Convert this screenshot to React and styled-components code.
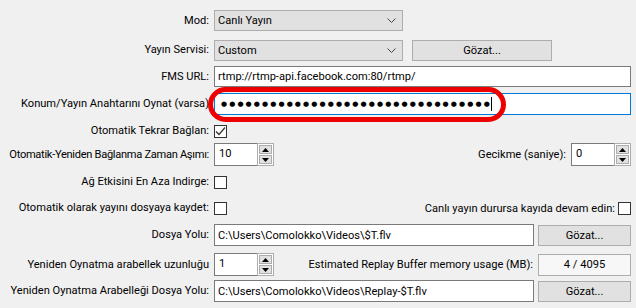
import React from "react";
import styled, { createGlobalStyle } from "styled-components";

const Global = createGlobalStyle`
  html, body { margin: 0; padding: 0; background: #f0f0f0; }
  body { font-family: Roboto, "Noto Sans", sans-serif; font-size: 11.1px; color: #000; }
  * { box-sizing: border-box; }
`;

const Page = styled.div`
  width: 636px;
  height: 308px;
  padding-top: 10px;
  background: #f0f0f0;
  position: relative;
  overflow: hidden;
`;

const Row = styled.div`
  display: grid;
  grid-template-columns: 209px 1fr;
  column-gap: 5px;
  height: ${(p) => p.$h}px;
  margin-top: ${(p) => p.$mt || 0}px;
  align-items: center;
`;

const Label = styled.div`
  display: flex;
  justify-content: flex-end;
  white-space: nowrap;
  line-height: 14px;
  min-width: 0;
  letter-spacing: ${(p) => p.$ls || 0}px;
`;

const Field = styled.div`
  display: flex;
  align-items: center;
  height: 100%;
  padding-right: 5px;
  gap: ${(p) => p.$gap || 0}px;
  min-width: 0;
`;

const Spacer = styled.div`
  flex: 1;
`;

const SideLabel = styled.div`
  white-space: nowrap;
  margin-right: ${(p) => p.$mr || 5}px;
`;

const Combo = styled.div`
  width: ${(p) => p.$w}px;
  height: 21px;
  background: #e1e1e1;
  border: 1px solid #adadad;
  display: flex;
  align-items: center;
  padding-left: 3px;
  justify-content: space-between;
  padding-right: 6px;
`;

const Button = styled.div`
  width: ${(p) => p.$w}px;
  height: 21px;
  background: #e1e1e1;
  border: 1px solid #adadad;
  display: flex;
  align-items: center;
  justify-content: center;
  margin-top: ${(p) => p.$mt || 0}px;
`;

const TextBox = styled.div`
  flex: ${(p) => (p.$w ? "none" : 1)};
  width: ${(p) => (p.$w ? `${p.$w}px` : "auto")};
  height: ${(p) => p.$h || 21}px;
  background: ${(p) => (p.$readonly ? "#f7f7f7" : "#fff")};
  border: 1px solid ${(p) => (p.$focus ? "#0078d7" : p.$readonly ? "#adadad" : "#7a7a7a")};
  display: flex;
  align-items: center;
  justify-content: ${(p) => (p.$center ? "center" : "flex-start")};
  padding-left: ${(p) => (p.$center ? 0 : 3)}px;
  white-space: nowrap;
  overflow: hidden;
`;

const Dots = styled.span`
  font-family: "DejaVu Sans", sans-serif;
  font-size: 7px;
  letter-spacing: 2.1px;
  line-height: 10px;
  padding-left: 3px;
`;

const Caret = styled.span`
  display: inline-block;
  width: 1px;
  height: 14px;
  background: #000;
  margin-left: -1px;
`;

const Check = styled.div`
  width: 13px;
  height: 13px;
  border: 1px solid #333;
  background: #fff;
  display: flex;
  align-items: center;
  justify-content: center;
`;

const Spin = styled.div`
  display: flex;
  width: 60px;
  height: 23px;
  align-self: flex-start;
`;

const SpinText = styled.div`
  flex: 1;
  background: #fff;
  border: 1px solid #7a7a7a;
  border-right: none;
  padding: 2px 0 0 4px;
  line-height: 16px;
`;

const SpinButtons = styled.div`
  width: 17px;
  border: 1px solid #adadad;
  background: #fff;
  display: flex;
  flex-direction: column;
  gap: 1px;
  padding: 1px;
`;

const SpinBtn = styled.div`
  flex: 1;
  background: #e1e1e1;
  border: 1px solid #adadad;
  display: flex;
  align-items: center;
  justify-content: center;
`;

const Ring = styled.div`
  position: absolute;
  left: 208px;
  top: 87px;
  width: 298px;
  height: 35px;
  border: 5px solid #ee0000;
  border-radius: 18px;
  pointer-events: none;
`;

const Chevron = () => (
  <svg width="9" height="5" viewBox="0 0 9 5">
    <path d="M0.5 0.5 L4.5 4.5 L8.5 0.5" fill="none" stroke="#444" strokeWidth="1" />
  </svg>
);

const CheckMark = () => (
  <svg width="11" height="11" viewBox="0 0 11 11">
    <path d="M1 5.5 L4 8.5 L10 1.5" fill="none" stroke="#333" strokeWidth="1.2" />
  </svg>
);

const Tri = ({ up }) => (
  <svg width="7" height="4" viewBox="0 0 7 4">
    <path d={up ? "M0 4 L7 4 L3.5 0 Z" : "M0 0 L7 0 L3.5 4 Z"} fill="#000" />
  </svg>
);

const SpinBox = ({ value }) => (
  <Spin>
    <SpinText>{value}</SpinText>
    <SpinButtons>
      <SpinBtn><Tri up /></SpinBtn>
      <SpinBtn><Tri /></SpinBtn>
    </SpinButtons>
  </Spin>
);

export default function App() {
  return (
    <>
      <Global />
      <Page>
        <Row $h={21}>
          <Label>Mod:</Label>
          <Field>
            <Combo $w={189}>Canlı Yayın<Chevron /></Combo>
          </Field>
        </Row>
        <Row $h={22} $mt={8}>
          <Label>Yayın Servisi:</Label>
          <Field $gap={9}>
            <Combo $w={189}>Custom<Chevron /></Combo>
            <Button $w={140} $mt={1}>Gözat...</Button>
          </Field>
        </Row>
        <Row $h={21} $mt={5}>
          <Label>FMS URL:</Label>
          <Field>
            <TextBox>rtmp://rtmp-api.facebook.com:80/rtmp/</TextBox>
          </Field>
        </Row>
        <Row $h={22} $mt={6}>
          <Label>Konum/Yayın Anahtarını Oynat (varsa)</Label>
          <Field>
            <TextBox $focus $h={22}>
              <Dots>{"●".repeat(33)}</Dots>
              <Caret />
            </TextBox>
          </Field>
        </Row>
        <Row $h={13} $mt={9}>
          <Label>Otomatik Tekrar Bağlan:</Label>
          <Field>
            <Check><CheckMark /></Check>
          </Field>
        </Row>
        <Row $h={23} $mt={6}>
          <Label $ls={-0.3}>Otomatik-Yeniden Bağlanma Zaman Aşımı:</Label>
          <Field>
            <SpinBox value="10" />
            <Spacer />
            <SideLabel>Gecikme (saniye):</SideLabel>
            <SpinBox value="0" />
          </Field>
        </Row>
        <Row $h={13} $mt={9}>
          <Label>Ağ Etkisini En Aza Indirge:</Label>
          <Field>
            <Check />
          </Field>
        </Row>
        <Row $h={13} $mt={13}>
          <Label>Otomatik olarak yayını dosyaya kaydet:</Label>
          <Field>
            <Check />
            <Spacer />
            <SideLabel $mr={3}>Canlı yayın durursa kayıda devam edin:</SideLabel>
            <Check />
          </Field>
        </Row>
        <Row $h={22} $mt={10}>
          <Label>Dosya Yolu:</Label>
          <Field $gap={4}>
            <TextBox $h={22}>C:\Users\Comolokko\Videos\$T.flv</TextBox>
            <Button $w={93}>Gözat...</Button>
          </Field>
        </Row>
        <Row $h={22} $mt={7}>
          <Label>Yeniden Oynatma arabellek uzunluğu</Label>
          <Field>
            <SpinBox value="1" />
            <Spacer />
            <SideLabel>Estimated Replay Buffer memory usage (MB):</SideLabel>
            <TextBox $w={93} $h={22} $readonly $center>4 / 4095</TextBox>
          </Field>
        </Row>
        <Row $h={22} $mt={5}>
          <Label>Yeniden Oynatma Arabelleği Dosya Yolu:</Label>
          <Field $gap={4}>
            <TextBox $h={22}>C:\Users\Comolokko\Videos\Replay-$T.flv</TextBox>
            <Button $w={93}>Gözat...</Button>
          </Field>
        </Row>
        <Ring />
      </Page>
    </>
  );
}
